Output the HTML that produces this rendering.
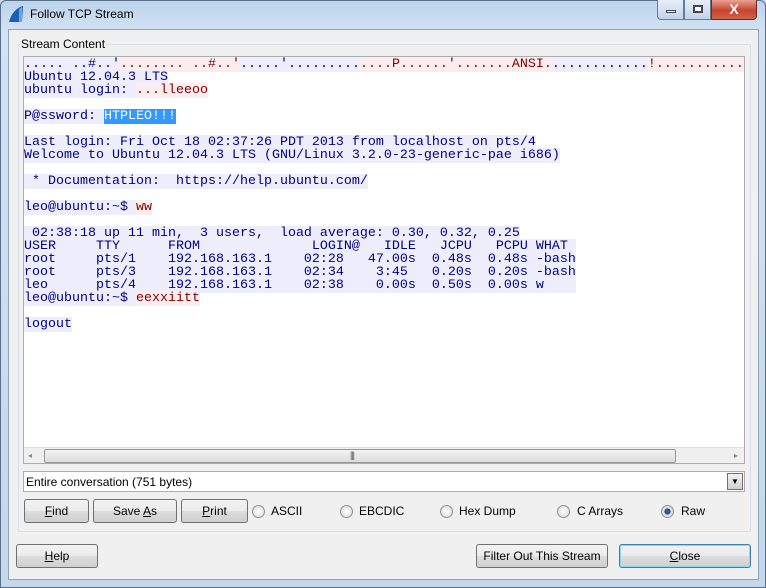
<!DOCTYPE html>
<html><head><meta charset="utf-8"><style>
*{margin:0;padding:0;box-sizing:border-box}
body{width:766px;height:588px;overflow:hidden;background:#c9dbee;font-family:"Liberation Sans",sans-serif;font-size:12px;position:relative}
.frame{position:absolute;left:0;top:0;width:766px;height:588px;background:linear-gradient(180deg,#bcd3ec 0,#d3e2f3 30px,#c4d7ed 100%);border:1px solid #5a6f88;border-radius:6px 6px 0 0}
.title{position:absolute;left:30px;top:7px;font-size:12px;color:#000}
.client{position:absolute;left:8px;top:29px;width:751px;height:551px;background:#f0f0f0;border:1px solid #8ea3bc}
.abs{position:absolute}
.group{position:absolute;left:9px;top:14px;width:733px;height:488px;border:1px solid #d5dfe5;border-radius:2px}
.glabel{position:absolute;left:11px;top:7px;background:#f0f0f0;padding:0 1px;color:#000}
.text{position:absolute;left:14px;top:26px;width:722px;height:408px;background:#fff;border:1px solid #abadb3;overflow:hidden}
pre{font-family:"Liberation Mono",monospace;font-size:13.33px;line-height:13px;margin:1px 0 0 0;white-space:pre}
.b{background:#ededfb;color:#000080}
.r{background:#fbeded;color:#800000}
.s{background:#3399ff;color:#fff}
.btn{position:absolute;height:24px;border:1px solid #707070;border-radius:3px;background:linear-gradient(#f2f2f2 0,#ebebeb 50%,#dddddd 51%,#cfcfcf 100%);text-align:center;line-height:22px;color:#000}
.radio{position:absolute;width:13px;height:13px;border-radius:50%;border:1px solid #8e8f8f;background:radial-gradient(#fff,#d8d8d8)}
.rl{position:absolute}
</style></head><body>
<div class="frame"></div>
<svg class="abs" style="left:7px;top:5px" width="18" height="18" viewBox="0 0 18 18"><path d="M2 17 C4 9 9 3 16 1 L15 17 Z" fill="#1d5fb0"/><path d="M12 4 L15 2 L15 17 L12 17Z" fill="#6fa5e0"/></svg>
<div class="title">Follow TCP Stream</div>
<div class="abs" style="left:657px;top:0;width:27px;height:20px;border:1px solid #6a7c90;border-top:none;border-radius:0 0 0 4px;background:linear-gradient(#e6eef8,#c2d3e8)"><div class="abs" style="left:8px;top:10px;width:10px;height:3px;background:#fff;border:1px solid #445"></div></div>
<div class="abs" style="left:684px;top:0;width:27px;height:20px;border:1px solid #6a7c90;border-top:none;background:linear-gradient(#e6eef8,#c2d3e8)"><div class="abs" style="left:8px;top:5px;width:10px;height:8px;border:2px solid #445;background:#fff"></div></div>
<div class="abs" style="left:711px;top:0;width:46px;height:20px;border:1px solid #6a2a20;border-top:none;border-radius:0 0 4px 0;background:linear-gradient(#e8a293,#c7442e 55%,#d0614a);color:#fff;font-weight:bold;font-size:14px;text-align:center;line-height:18px">X</div>
<div class="client">
 <div class="group"></div>
 <div class="glabel">Stream Content</div>
 <div class="text"><pre><span class="b">..... ..#..'</span><span class="r">........ ..#..'</span><span class="b">.....'.........</span><span class="r">....P......'.......ANSI.</span><span class="b">............</span><span class="r">!...........</span>
<span class="b">Ubuntu 12.04.3 LTS</span>
<span class="b">ubuntu login: </span><span class="r">...lleeoo</span>

<span class="b">P@ssword: </span><span class="s">HTPLEO!!!</span>

<span class="b">Last login: Fri Oct 18 02:37:26 PDT 2013 from localhost on pts/4</span>
<span class="b">Welcome to Ubuntu 12.04.3 LTS (GNU/Linux 3.2.0-23-generic-pae i686)</span>

<span class="b"> * Documentation:  https://help.ubuntu.com/</span>

<span class="b">leo@ubuntu:~$ </span><span class="r">ww</span>

<span class="b"> 02:38:18 up 11 min,  3 users,  load average: 0.30, 0.32, 0.25</span>
<span class="b">USER     TTY      FROM              LOGIN@   IDLE   JCPU   PCPU WHAT </span>
<span class="b">root     pts/1    192.168.163.1    02:28   47.00s  0.48s  0.48s -bash</span>
<span class="b">root     pts/3    192.168.163.1    02:34    3:45   0.20s  0.20s -bash</span>
<span class="b">leo      pts/4    192.168.163.1    02:38    0.00s  0.50s  0.00s w    </span>
<span class="b">leo@ubuntu:~$ </span><span class="r">eexxiitt</span>

<span class="b">logout</span></pre>
  <div class="abs" style="left:0;top:390px;width:720px;height:17px;background:#f0f0f0;border-top:1px solid #e0e0e0">
   <div class="abs" style="left:4px;top:3px;font-size:8px;color:#888">◂</div>
   <div class="abs" style="left:20px;top:1px;width:632px;height:14px;border:1px solid #979797;border-radius:2px;background:linear-gradient(#f3f3f3,#dcdcdc)"><div class="abs" style="left:305px;top:0;font-size:9px;color:#555;letter-spacing:-1px">|||</div></div>
   <div class="abs" style="left:710px;top:3px;font-size:8px;color:#888">▸</div>
  </div>
 </div>
 <div class="abs" style="left:14px;top:441px;width:722px;height:21px;background:#fff;border:1px solid #abadb3"><div class="abs" style="left:2px;top:3px">Entire conversation (751 bytes)</div><div class="abs" style="right:1px;top:1px;width:16px;height:17px;border:1px solid #707070;background:linear-gradient(#f2f2f2,#d0d0d0);font-size:8px;text-align:center;line-height:16px">▼</div></div>
 <div class="btn" style="left:15px;top:469px;width:65px"><u>F</u>ind</div>
 <div class="btn" style="left:84px;top:469px;width:84px">Save <u>A</u>s</div>
 <div class="btn" style="left:172px;top:469px;width:67px"><u>P</u>rint</div>
 <div class="radio" style="left:243px;top:475px"></div><div class="rl" style="left:262px;top:474px">ASCII</div>
 <div class="radio" style="left:331px;top:475px"></div><div class="rl" style="left:350px;top:474px">EBCDIC</div>
 <div class="radio" style="left:431px;top:475px"></div><div class="rl" style="left:450px;top:474px">Hex Dump</div>
 <div class="radio" style="left:548px;top:475px"></div><div class="rl" style="left:568px;top:474px">C Arrays</div>
 <div class="radio" style="left:652px;top:475px;background:radial-gradient(#2b6db8 0,#1b4f8f 35%,#e8e8e8 45%,#cfcfcf)"></div><div class="rl" style="left:672px;top:474px">Raw</div>
 <div class="btn" style="left:7px;top:514px;width:82px"><u>H</u>elp</div>
 <div class="btn" style="left:467px;top:514px;width:132px">Filter Out This Stream</div>
 <div class="btn" style="left:610px;top:514px;width:132px;border-color:#3c7fb1;box-shadow:inset 0 0 0 1px #8fd4f5"><u>C</u>lose</div>
</div>
</body></html>
